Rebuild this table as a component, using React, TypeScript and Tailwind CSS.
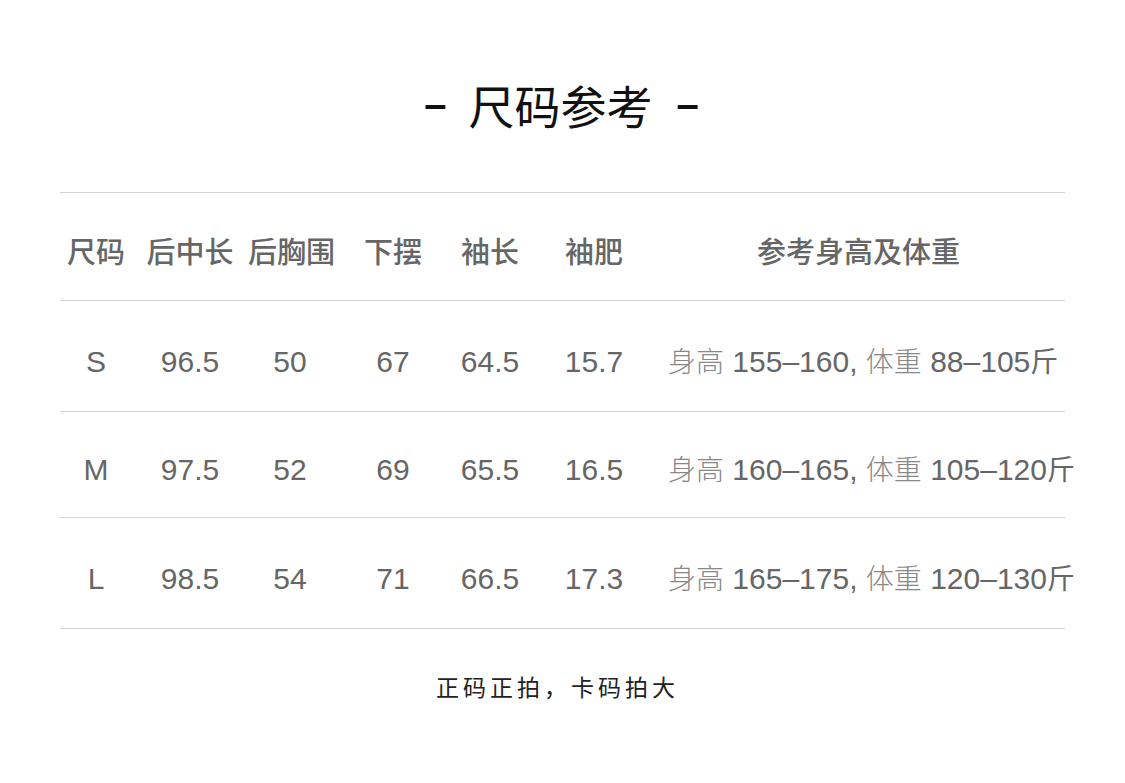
import React from 'react';

const rows = [
  { size: 'S', vals: ['96.5', '50', '67', '64.5', '15.7'], h: '155–160', w: '88–105' },
  { size: 'M', vals: ['97.5', '52', '69', '65.5', '16.5'], h: '160–165', w: '105–120' },
  { size: 'L', vals: ['98.5', '54', '71', '66.5', '17.3'], h: '165–175', w: '120–130' },
];

const heads = ['尺码', '后中长', '后胸围', '下摆', '袖长', '袖肥'];

const grid = 'grid grid-cols-[72px_116px_84px_122px_72px_136px_1fr] items-center';

export default function App() {
  return (
    <div className="w-[1125px] h-[783px] bg-white font-['Liberation_Sans','Noto_Sans_CJK_SC',sans-serif] text-[#666]">
      <div className="flex justify-center items-start pt-[74px] h-[192px] pr-[2px]">
        <h1 className="flex items-center h-[60px] text-[46px] leading-[60px] font-normal text-[#111] font-['Noto_Sans_CJK_SC',sans-serif] whitespace-nowrap">
          <span className="font-['Liberation_Sans',sans-serif] font-bold text-[40px] mr-[22px]">–</span>
          尺码参考
          <span className="font-['Liberation_Sans',sans-serif] font-bold text-[40px] ml-[24px]">–</span>
        </h1>
      </div>

      <div className="mx-[60px] border-t border-[#d4d4d4]">
        <div className={`${grid} h-[108px] pt-[8px] border-b border-[#d4d4d4] text-[29px] font-medium font-['Noto_Sans_CJK_SC',sans-serif]`}>
          {heads.map((h) => (
            <div key={h} className="text-center whitespace-nowrap">{h}</div>
          ))}
          <div className="text-center pr-[10px] whitespace-nowrap">参考身高及体重</div>
        </div>

        {rows.map((r, i) => (
          <div
            key={r.size}
            className={`${grid} ${i === 1 ? 'h-[106px]' : 'h-[111px]'} pt-[10px] border-b border-[#d4d4d4] text-[30px]`}
          >
            <div className="text-center">{r.size}</div>
            {r.vals.map((v, j) => (
              <div key={j} className="text-center">{v}</div>
            ))}
            <div className="pl-[6px] whitespace-nowrap">
              <span className="font-['Noto_Sans_CJK_SC',sans-serif] font-light text-[#888] text-[28px]">身高</span>
              <span className="font-medium"> {r.h}, </span>
              <span className="font-['Noto_Sans_CJK_SC',sans-serif] font-light text-[#888] text-[28px]">体重</span>
              <span className="font-medium"> {r.w}</span>
              <span className="font-['Noto_Sans_CJK_SC',sans-serif] text-[28px]">斤</span>
            </div>
          </div>
        ))}
      </div>

      <div className="flex justify-center pt-[40px] pr-[10px]">
        <p className="text-[23px] tracking-[4px] text-[#222] font-['Noto_Sans_CJK_SC',sans-serif]">正码正拍，卡码拍大</p>
      </div>
    </div>
  );
}
